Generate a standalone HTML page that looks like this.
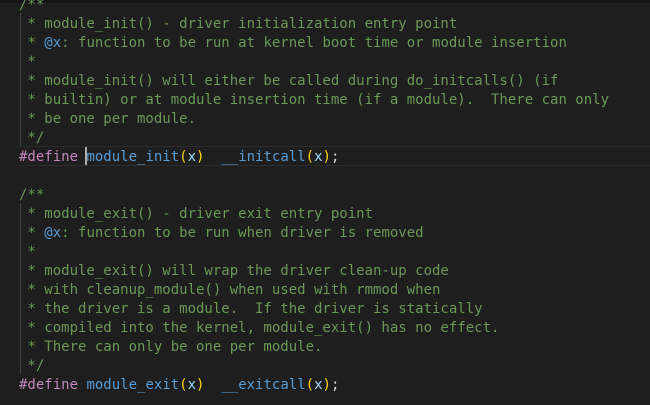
<!DOCTYPE html>
<html><head><style>
html,body{margin:0;padding:0;background:#1e1e1e;width:650px;height:405px;overflow:hidden}
.top{position:absolute;left:0;top:0;width:650px;height:3px;background:#151515}
.code{position:absolute;left:19px;top:-4.5px;font-family:"DejaVu Sans Mono","Liberation Mono",monospace;font-size:14px;line-height:19px;white-space:pre;color:#6a9955}
.k{color:#c586c0}.f{color:#569cd6}.p{color:#ffd700}.v{color:#9cdcfe}.d{color:#d4d4d4}.t{color:#569cd6}
.hl{position:absolute;left:18px;top:146px;width:632px;height:18px;border:1px solid #2c2c2c;border-left:none;border-right:none}
.guide{position:absolute;left:20px;width:1px;background:#404040}
.cur{position:absolute;left:85px;top:147px;width:2px;height:18px;background:#aeafad}
</style></head><body>
<div class="top"></div>
<div class="hl"></div>
<div class="guide" style="top:13px;height:133px"></div>
<div class="guide" style="top:203px;height:171px"></div>
<div class="code">/**
 * module_init() - driver initialization entry point
 * <span class="t">@x</span>: function to be run at kernel boot time or module insertion
 *
 * module_init() will either be called during do_initcalls() (if
 * builtin) or at module insertion time (if a module).  There can only
 * be one per module.
 */
<span class="k">#define</span> <span class="f">module_init</span><span class="p">(</span><span class="v">x</span><span class="p">)</span>  <span class="f">__initcall</span><span class="p">(</span><span class="v">x</span><span class="p">)</span><span class="d">;</span>

/**
 * module_exit() - driver exit entry point
 * <span class="t">@x</span>: function to be run when driver is removed
 *
 * module_exit() will wrap the driver clean-up code
 * with cleanup_module() when used with rmmod when
 * the driver is a module.  If the driver is statically
 * compiled into the kernel, module_exit() has no effect.
 * There can only be one per module.
 */
<span class="k">#define</span> <span class="f">module_exit</span><span class="p">(</span><span class="v">x</span><span class="p">)</span>  <span class="f">__exitcall</span><span class="p">(</span><span class="v">x</span><span class="p">)</span><span class="d">;</span></div>
<div class="cur"></div>
</body></html>
